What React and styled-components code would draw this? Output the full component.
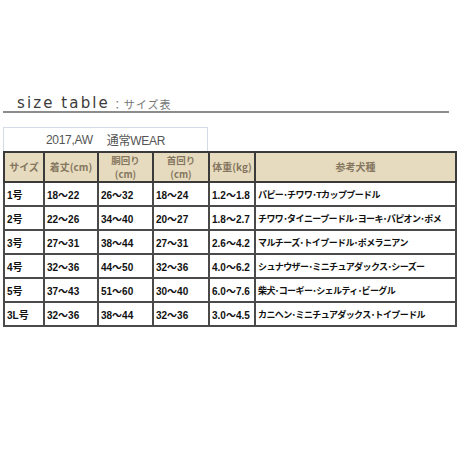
import React from "react";
import styled, { createGlobalStyle } from "styled-components";

const Global = createGlobalStyle`
  html, body { margin: 0; padding: 0; background: #fff; }
  body { font-family: "Liberation Sans", "Noto Sans CJK JP", sans-serif; }
`;

const Page = styled.div`
  width: 460px;
  height: 460px;
  padding-top: 92px;
  box-sizing: border-box;
`;

const Heading = styled.div`
  margin: 0 11px 0 3px;
  padding-left: 14px;
  height: 19px;
  border-bottom: 2px solid #8c8c8c;
  display: flex;
  align-items: flex-end;
  color: #3c3c3c;
  line-height: 1;
`;

const HeadMain = styled.span`
  font-family: "DejaVu Sans", sans-serif;
  font-size: 15px;
  letter-spacing: 2.1px;
`;

const HeadSub = styled.span`
  font-family: "Noto Sans CJK JP", sans-serif;
  font-size: 11px;
  color: #777;
  padding-bottom: 1px;
  margin-left: 2px;
  letter-spacing: 1px;
`;

const Caption = styled.div`
  margin: 14px 0 0 3px;
  width: 205px;
  height: 24px;
  box-sizing: border-box;
  border: 1px solid #d4dbe6;
  border-bottom: none;
  display: flex;
  align-items: center;
  justify-content: center;
  gap: 14px;
  font-size: 12px;
  color: #555;
  font-family: "Liberation Sans", "Noto Sans CJK JP", sans-serif;
  letter-spacing: -0.3px;
`;

const Table = styled.table`
  margin-left: 3px;
  width: 454px;
  border-collapse: collapse;
  border: 2px solid #111;
  table-layout: fixed;
`;

const Th = styled.th`
  background: #e6dbbe;
  color: #857660;
  font-size: 10px;
  font-weight: bold;
  height: 28px;
  padding: 0;
  line-height: 14px;
  border: 2px solid #3a3a3a;
  text-align: center;
  vertical-align: middle;
  font-family: "Noto Sans CJK JP", sans-serif;
`;

const HeadLine = styled.span`
  display: block;
  font-size: 9.5px;
  line-height: 14px;
`;

const Td = styled.td`
  height: 22px;
  padding: 0 0 0 2px;
  font-size: ${(p) => (p.$breed ? "9px" : "10px")};
  font-weight: bold;
  color: #111;
  border: 2px solid #4a4a4a;
  text-align: left;
  vertical-align: middle;
  white-space: nowrap;
  overflow: hidden;
  font-family: "Liberation Sans", "Noto Sans CJK JP", sans-serif;
  letter-spacing: ${(p) => (p.$breed ? "-0.6px" : "0")};
`;

const cols = [40, 54, 55, 56, 46, null];

const rows = [
  ["1号", "18～22", "26～32", "18～24", "1.2～1.8", "パピー･チワワ･Tカッププードル"],
  ["2号", "22～26", "34～40", "20～27", "1.8～2.7", "チワワ･タイニープードル･ヨーキ･パピオン･ポメ"],
  ["3号", "27～31", "38～44", "27～31", "2.6～4.2", "マルチーズ･トイプードル･ポメラニアン"],
  ["4号", "32～36", "44～50", "32～36", "4.0～6.2", "シュナウザー･ミニチュアダックス･シーズー"],
  ["5号", "37～43", "51～60", "30～40", "6.0～7.6", "柴犬･コーギー･シェルティ･ビーグル"],
  ["3L号", "32～36", "38～44", "32～36", "3.0～4.5", "カニヘン･ミニチュアダックス･トイプードル"],
];

export default function App() {
  return (
    <Page>
      <Global />
      <Heading>
        <HeadMain>size table</HeadMain>
        <HeadSub>：サイズ表</HeadSub>
      </Heading>
      <Caption>
        <span>2017,AW</span>
        <span>通常WEAR</span>
      </Caption>
      <Table>
        <colgroup>
          {cols.map((w, i) => (
            <col key={i} style={w ? { width: w } : undefined} />
          ))}
        </colgroup>
        <thead>
          <tr>
            <Th>サイズ</Th>
            <Th>着丈(cm)</Th>
            <Th>
              <HeadLine>胴回り</HeadLine>
              <HeadLine>(cm)</HeadLine>
            </Th>
            <Th>
              <HeadLine>首回り</HeadLine>
              <HeadLine>(cm)</HeadLine>
            </Th>
            <Th>体重(kg)</Th>
            <Th>参考犬種</Th>
          </tr>
        </thead>
        <tbody>
          {rows.map((r) => (
            <tr key={r[0]}>
              {r.map((c, i) => (
                <Td key={i} $breed={i === 5}>
                  {c}
                </Td>
              ))}
            </tr>
          ))}
        </tbody>
      </Table>
    </Page>
  );
}
